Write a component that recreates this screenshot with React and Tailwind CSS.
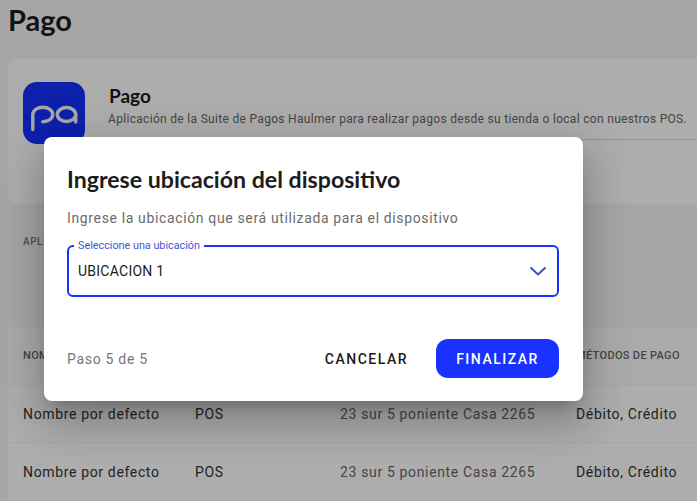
export default function App() {
  const rows = [0, 1];
  return (
    <div className="relative h-[501px] w-[697px] overflow-hidden bg-[#f5f5f7] font-['Roboto',sans-serif]">
      <div className="pl-2">
        <h1 className="h-[41px] font-['Lato',sans-serif] text-[29px] font-bold leading-[40px] text-[#1c1c1e]">Pago</h1>
        <section className="mt-[18px] flex h-[145px] rounded-l-lg bg-white pl-[15px] pt-[23px]">
          <div className="h-[62px] w-[62px] shrink-0 rounded-[14px] bg-[#1330fe]">
            <svg width="62" height="62" viewBox="0 0 62 62" fill="none" stroke="#f7f7f9" strokeWidth="3.4" strokeLinecap="round">
              <path d="M9.8 47.5V32.5a10 7.2 0 1 1 10 7.2" />
              <ellipse cx="43.5" cy="32.5" rx="9.2" ry="7" />
              <path d="M52.7 32.5V40" />
            </svg>
          </div>
          <div className="ml-[23px] flex-1">
            <h2 className="mt-[2px] pl-px font-['Lato',sans-serif] text-[19px] font-bold leading-6 text-[#1c1c1e]">Pago</h2>
            <p className="mt-[1px] whitespace-nowrap text-xs leading-5 tracking-[0.31px] text-[#666]">
              Aplicación de la Suite de Pagos Haulmer para realizar pagos desde su tienda o local con nuestros POS.
            </p>
            <div className="mt-[10px] h-px bg-[#d9d9d9]" />
          </div>
        </section>
        <p className="mt-[31px] h-[14px] pl-[15px] text-[10px] font-medium leading-[14px] tracking-[0.5px] text-[#777]">APLICACIONES</p>
        <section className="mt-[78px] rounded-tl-lg bg-white">
          <div className="grid h-[57px] grid-cols-[172px_145px_236px_1fr] items-center bg-[#fbfbfb] pl-[15px] pt-px text-[11px] font-medium uppercase tracking-[0.33px] text-[#666]">
            <span>Nombre</span>
            <span>Tipo</span>
            <span>Dirección</span>
            <span>Métodos de pago</span>
          </div>
          {rows.map((r) => (
            <div key={r} className="grid h-[58px] grid-cols-[172px_145px_236px_1fr] items-center border-t border-[#f5f5f5] pl-[15px] text-sm tracking-[0.65px] text-[#333]">
              <span>Nombre por defecto</span>
              <span>POS</span>
              <span className="text-[#666]">23 sur 5 poniente Casa 2265</span>
              <span>Débito, Crédito</span>
            </div>
          ))}
        </section>
      </div>

      <div className="absolute inset-0 flex items-start bg-[rgba(0,0,0,0.32)] pl-[44px] pt-[137px]">
        <div className="flex h-[264px] w-[539px] flex-col rounded-lg bg-white pl-[23px] pr-[24px] shadow-[0_11px_15px_-7px_rgba(0,0,0,0.2),0_24px_38px_3px_rgba(0,0,0,0.14),0_9px_46px_8px_rgba(0,0,0,0.12)]">
          <h3 className="mt-[27px] whitespace-nowrap font-['Lato',sans-serif] text-[23.15px] font-bold leading-[30px] text-[#1c1c1e]">Ingrese ubicación del dispositivo</h3>
          <p className="mt-[14px] text-sm leading-5 tracking-[0.64px] text-[#6b6b6b]">Ingrese la ubicación que será utilizada para el dispositivo</p>
          <div className="relative mt-[17px] flex h-[52px] items-center justify-between rounded-md border-2 border-[#1a32ff] pl-[9px] pr-[10px]">
            <span className="absolute -top-[7px] left-[5px] whitespace-nowrap bg-white px-[4px] text-[10.8px] leading-[12px] text-[#3f55d6]">Seleccione una ubicación</span>
            <span className="text-sm tracking-[0.25px] text-[#1c1c1e]">UBICACION 1</span>
            <svg width="18" height="12" viewBox="0 0 18 12" fill="none" stroke="#3a50b8" strokeWidth="2">
              <path d="M1.5 2.5 9 9.5 16.5 2.5" />
            </svg>
          </div>
          <div className="mt-[42px] flex items-center">
            <span className="text-sm tracking-[0.7px] text-[#777]">Paso 5 de 5</span>
            <button className="ml-auto text-sm font-medium uppercase tracking-[1.5px] text-[#1c1c1e]">Cancelar</button>
            <button className="ml-[28px] h-[39px] w-[123px] rounded-xl bg-[#1a32ff] text-sm font-medium uppercase tracking-[1.5px] text-white">Finalizar</button>
          </div>
        </div>
      </div>
    </div>
  );
}
